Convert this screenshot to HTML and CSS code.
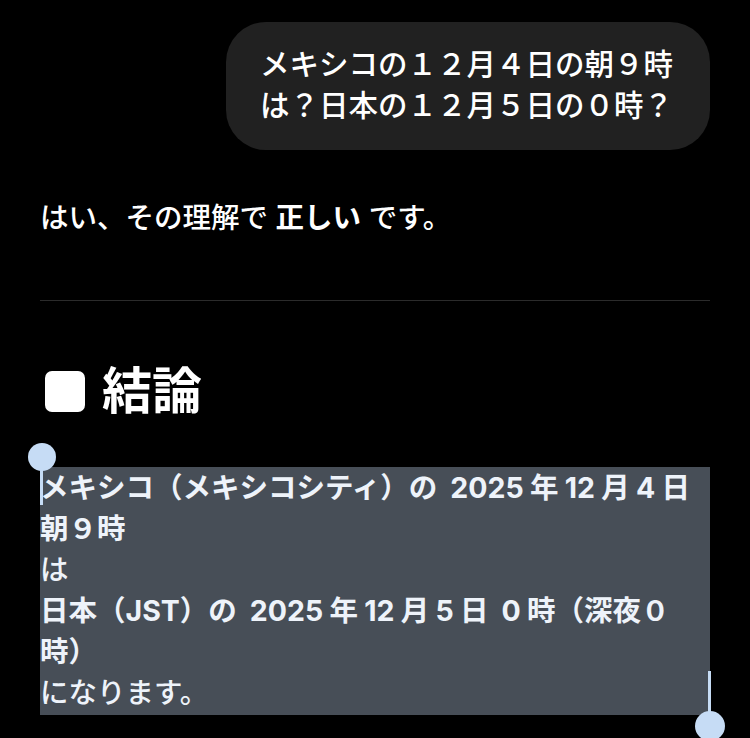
FILE: index.html
```html
<!DOCTYPE html>
<html lang="ja">
<head>
    <meta charset="UTF-8">
    <meta name="viewport" content="width=device-width, initial-scale=1.0">
    <title>チャット</title>
    <link rel="stylesheet" href="styles.css">
</head>
<body>
    <div class="chat">
        <div class="user-row">
            <div class="bubble">メキシコの１２月４日の朝９時は？日本の１２月５日の０時？</div>
        </div>

        <div class="reply">
            <p class="lead">はい、その理解で <strong>正しい</strong> です。</p>

            <hr class="divider">

            <h2 class="section-title"><span class="square"></span>結論</h2>

            <p class="selected">
                <span class="handle handle-start"></span>
                <strong>メキシコ（メキシコシティ）の <span class="num">2025</span>年<span class="num">12</span>月<span class="num">4</span>日<br>朝９時</strong><br>
                は<br>
                <strong>日本（JST）の <span class="num">2025</span>年<span class="num">12</span>月<span class="num">5</span>日 <span class="num">0</span>時（深夜０時）</strong><br>
                になります。
                <span class="handle handle-end"></span>
            </p>
        </div>
    </div>
</body>
</html>
```

FILE: styles.css
```css
html, body {
    height: 100%;
    overflow: hidden;
}

body {
    margin: 0;
    padding: 22px 40px 0;
    background-color: #000;
    color: #fff;
    font-family: Inter, "Noto Sans CJK JP", sans-serif;
    font-weight: 500;
}

.user-row {
    display: flex;
    justify-content: flex-end;
}

.bubble {
    box-sizing: border-box;
    max-width: 484px;
    padding: 22px 34px 24px;
    background-color: #212121;
    border-radius: 40px;
    font-size: 29.5px;
    line-height: 41px;
}

.lead {
    margin: 47px 0 0;
    font-size: 28.5px;
    line-height: 41px;
}

.lead strong {
    font-weight: 700;
}

.divider {
    margin: 62px 0 0;
    border: none;
    border-top: 1px solid #2b2b2b;
}

.section-title {
    display: flex;
    align-items: center;
    gap: 17px;
    margin: 60px 0 0;
    font-size: 50px;
    line-height: 60px;
    font-weight: 700;
}

.square {
    width: 40px;
    height: 41px;
    margin-left: 5px;
    background-color: #fff;
    border-radius: 7px;
}

.selected {
    position: relative;
    margin: 46px 0 0;
    padding-bottom: 2px;
    background-color: #474e57;
    color: #eef3fa;
    font-size: 28.5px;
    line-height: 41px;
}

.selected strong {
    font-weight: 700;
}

.num {
    margin: 0 0.22em;
}

.handle::before,
.handle::after {
    content: "";
    position: absolute;
    background-color: #c6dcf5;
}

.handle-start::before {
    left: -12px;
    top: -24px;
    width: 28px;
    height: 28px;
    border-radius: 50%;
}

.handle-start::after {
    left: 0;
    top: -10px;
    width: 3px;
    height: 48px;
}

.handle-end::before {
    right: -15px;
    top: 244px;
    width: 30px;
    height: 30px;
    border-radius: 50%;
}

.handle-end::after {
    right: -1px;
    top: 204px;
    width: 3px;
    height: 50px;
}
```
